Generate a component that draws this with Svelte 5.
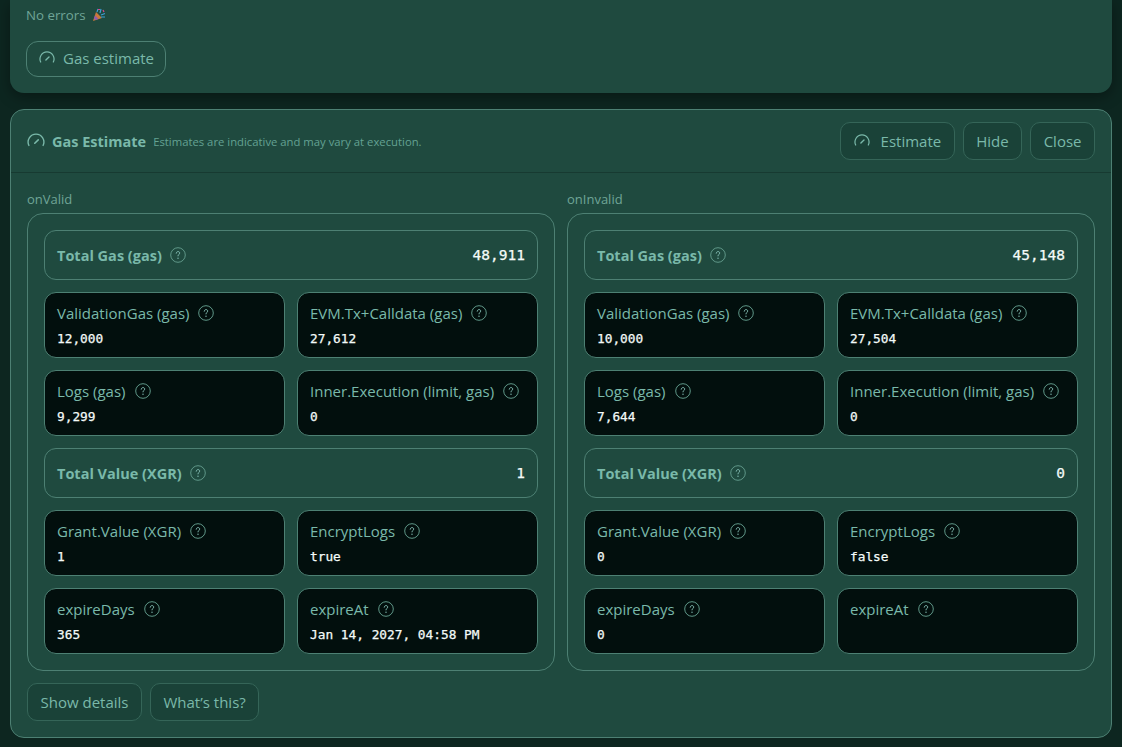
<script>
  const sides = [
    { label: 'onValid', gas: '48,911', vg: '12,000', evm: '27,612', logs: '9,299', inner: '0', value: '1', grant: '1', enc: 'true', days: '365', at: 'Jan 14, 2027, 04:58 PM' },
    { label: 'onInvalid', gas: '45,148', vg: '10,000', evm: '27,504', logs: '7,644', inner: '0', value: '0', grant: '0', enc: 'false', days: '0', at: '' }
  ];
</script>

{#snippet gauge(cls)}
  <svg class={cls} viewBox="0 0 16 16" fill="none" stroke="currentColor" stroke-width="1.2" stroke-linecap="round">
    <path d="M1.7 12A7 7 0 1 1 14.3 12" />
    <path d="M6.9 10 10 7" stroke-width="1.4" />
  </svg>
{/snippet}

{#snippet help()}
  <svg class="help" viewBox="0 0 16 16" fill="none">
    <circle cx="8" cy="8" r="7.3" stroke="#5f9788" />
    <path d="M6.2 6.2c0-2.2 3.5-2.2 3.5-.1 0 1.3-1.7 1.2-1.7 2.8" stroke="#84bdb4" stroke-width="1" stroke-linecap="round" />
    <circle cx="8" cy="11.2" r=".7" fill="#84bdb4" />
  </svg>
{/snippet}

{#snippet tile(name, val)}
  <div class="tile">
    <div class="name">{name} {@render help()}</div>
    <div class="val">{val}</div>
  </div>
{/snippet}

{#snippet total(name, val)}
  <div class="total">
    <div class="tname">{name} {@render help()}</div>
    <div class="tval">{val}</div>
  </div>
{/snippet}

<div class="page">
  <section class="top">
    <p class="noerr">No errors
      <svg class="party" viewBox="0 0 14 14">
        <path d="M1 13 4 4l6 6z" fill="#c8783a" />
        <path d="M2 10.5 3 7.5l3.5 3.6-3 1z" fill="#8a5ab0" />
        <path d="M5 4 6 1M8 5l1-4M9 7l4-1.5M9 9l4 0" stroke="#3d9fd6" stroke-width="1.2" fill="none" />
        <path d="M6 1.5h2M11 2l1 2" stroke="#d24a8c" stroke-width="1.2" fill="none" />
      </svg>
    </p>
    <button class="pill">{@render gauge('ico')} Gas estimate</button>
  </section>

  <section class="card">
    <header class="head">
      <div class="title">
        {@render gauge('ico big')}
        <strong>Gas Estimate</strong>
        <small>Estimates are indicative and may vary at execution.</small>
      </div>
      <div class="actions">
        <button class="btn est">{@render gauge('ico')} Estimate</button>
        <button class="btn">Hide</button>
        <button class="btn">Close</button>
      </div>
    </header>

    <div class="body">
      <div class="cols">
        {#each sides as s}
          <div class="col">
            <div class="label">{s.label}</div>
            <div class="panel">
              {@render total('Total Gas (gas)', s.gas)}
              <div class="grid">
                {@render tile('ValidationGas (gas)', s.vg)}
                {@render tile('EVM.Tx+Calldata (gas)', s.evm)}
                {@render tile('Logs (gas)', s.logs)}
                {@render tile('Inner.Execution (limit, gas)', s.inner)}
              </div>
              {@render total('Total Value (XGR)', s.value)}
              <div class="grid">
                {@render tile('Grant.Value (XGR)', s.grant)}
                {@render tile('EncryptLogs', s.enc)}
                {@render tile('expireDays', s.days)}
                {@render tile('expireAt', s.at)}
              </div>
            </div>
          </div>
        {/each}
      </div>
      <div class="foot">
        <button class="btn">Show details</button>
        <button class="btn">What’s this?</button>
      </div>
    </div>
  </section>
</div>

<style>
  :global(body) {
    margin: 0;
    background: #0d2620;
    font-family: "Open Sans", "Noto Sans", sans-serif;
  }
  .page {
    height: 747px;
    overflow: hidden;
    box-sizing: border-box;
    padding: 0 10px;
    display: flex;
    flex-direction: column;
    gap: 16px;
    color: #7ab9aa;
  }
  .top {
    height: 93px;
    flex: none;
    box-sizing: border-box;
    background: #1f4a3f;
    border-radius: 0 0 14px 14px;
    padding: 6px 16px 0;
    box-shadow: 0 4px 14px rgba(0, 0, 0, .35);
  }
  .noerr {
    margin: 0;
    font-size: 13.3px;
    line-height: 18px;
    color: #6fa597;
    display: flex;
    align-items: center;
    gap: 6px;
  }
  .party { width: 14px; height: 14px; }
  .pill {
    margin-top: 17px;
    height: 36px;
    width: 140px;
    padding: 0 12px 2px;
    display: flex;
    align-items: center;
    gap: 8px;
    background: transparent;
    border: 1px solid #4d8073;
    border-radius: 12px;
    color: #7ab9aa;
    font: inherit;
    font-size: 15px;
    white-space: nowrap;
  }
  .ico { width: 16px; height: 16px; flex: none; }
  .big { width: 18px; height: 18px; }
  .card {
    flex: none;
    height: 629px;
    box-sizing: border-box;
    background: #1f4a3f;
    border: 1px solid #4d8073;
    border-radius: 14px;
    display: flex;
    flex-direction: column;
  }
  .head {
    height: 63px;
    flex: none;
    box-sizing: border-box;
    border-bottom: 1px solid #173a31;
    padding: 0 16px;
    display: flex;
    align-items: center;
    justify-content: space-between;
  }
  .title { display: flex; align-items: center; gap: 7px; }
  .title strong { font-size: 14.5px; font-weight: 700; color: #7ab9aa; }
  .title small { font-size: 11.3px; color: #64a293; }
  .actions { display: flex; gap: 8px; }
  .btn {
    height: 38px;
    padding: 0 12.5px;
    background: #1a4238;
    border: 1px solid #356558;
    border-radius: 10px;
    color: #7ab9aa;
    font: inherit;
    font-size: 15px;
    display: flex;
    align-items: center;
    white-space: nowrap;
  }
  .est { gap: 11px; }
  .body { padding: 18px 16px 0; }
  .cols { display: grid; grid-template-columns: 1fr 1fr; gap: 12px; }
  .label { font-size: 13px; line-height: 17px; color: #6fa597; margin-bottom: 5px; }
  .panel {
    border: 1px solid #4d8073;
    border-radius: 16px;
    padding: 16px;
    display: flex;
    flex-direction: column;
    gap: 12px;
  }
  .total {
    height: 50px;
    box-sizing: border-box;
    border: 1px solid #4d8073;
    border-radius: 12px;
    padding: 0 12px;
    display: flex;
    align-items: center;
    justify-content: space-between;
  }
  .tname { font-size: 14.5px; font-weight: 700; color: #7ab9aa; display: flex; align-items: center; gap: 8px; }
  .tval, .val {
    font-family: "DejaVu Sans Mono", monospace;
    color: #f4fbf9;
    -webkit-text-stroke: 0.25px #f4fbf9;
  }
  .tval { font-size: 14.5px; }
  .grid { display: grid; grid-template-columns: 1fr 1fr; gap: 12px; }
  .tile {
    height: 66px;
    box-sizing: border-box;
    background: #020f0d;
    border: 1px solid #4d8073;
    border-radius: 12px;
    padding: 10px 12px;
  }
  .name { font-size: 15px; line-height: 20px; color: #7ab9aa; display: flex; align-items: center; gap: 9px; white-space: nowrap; }
  .val { font-size: 12.8px; line-height: 16px; margin-top: 8px; }
  .help { width: 16px; height: 16px; flex: none; }
  .foot { display: flex; gap: 8px; margin-top: 12px; }
</style>
